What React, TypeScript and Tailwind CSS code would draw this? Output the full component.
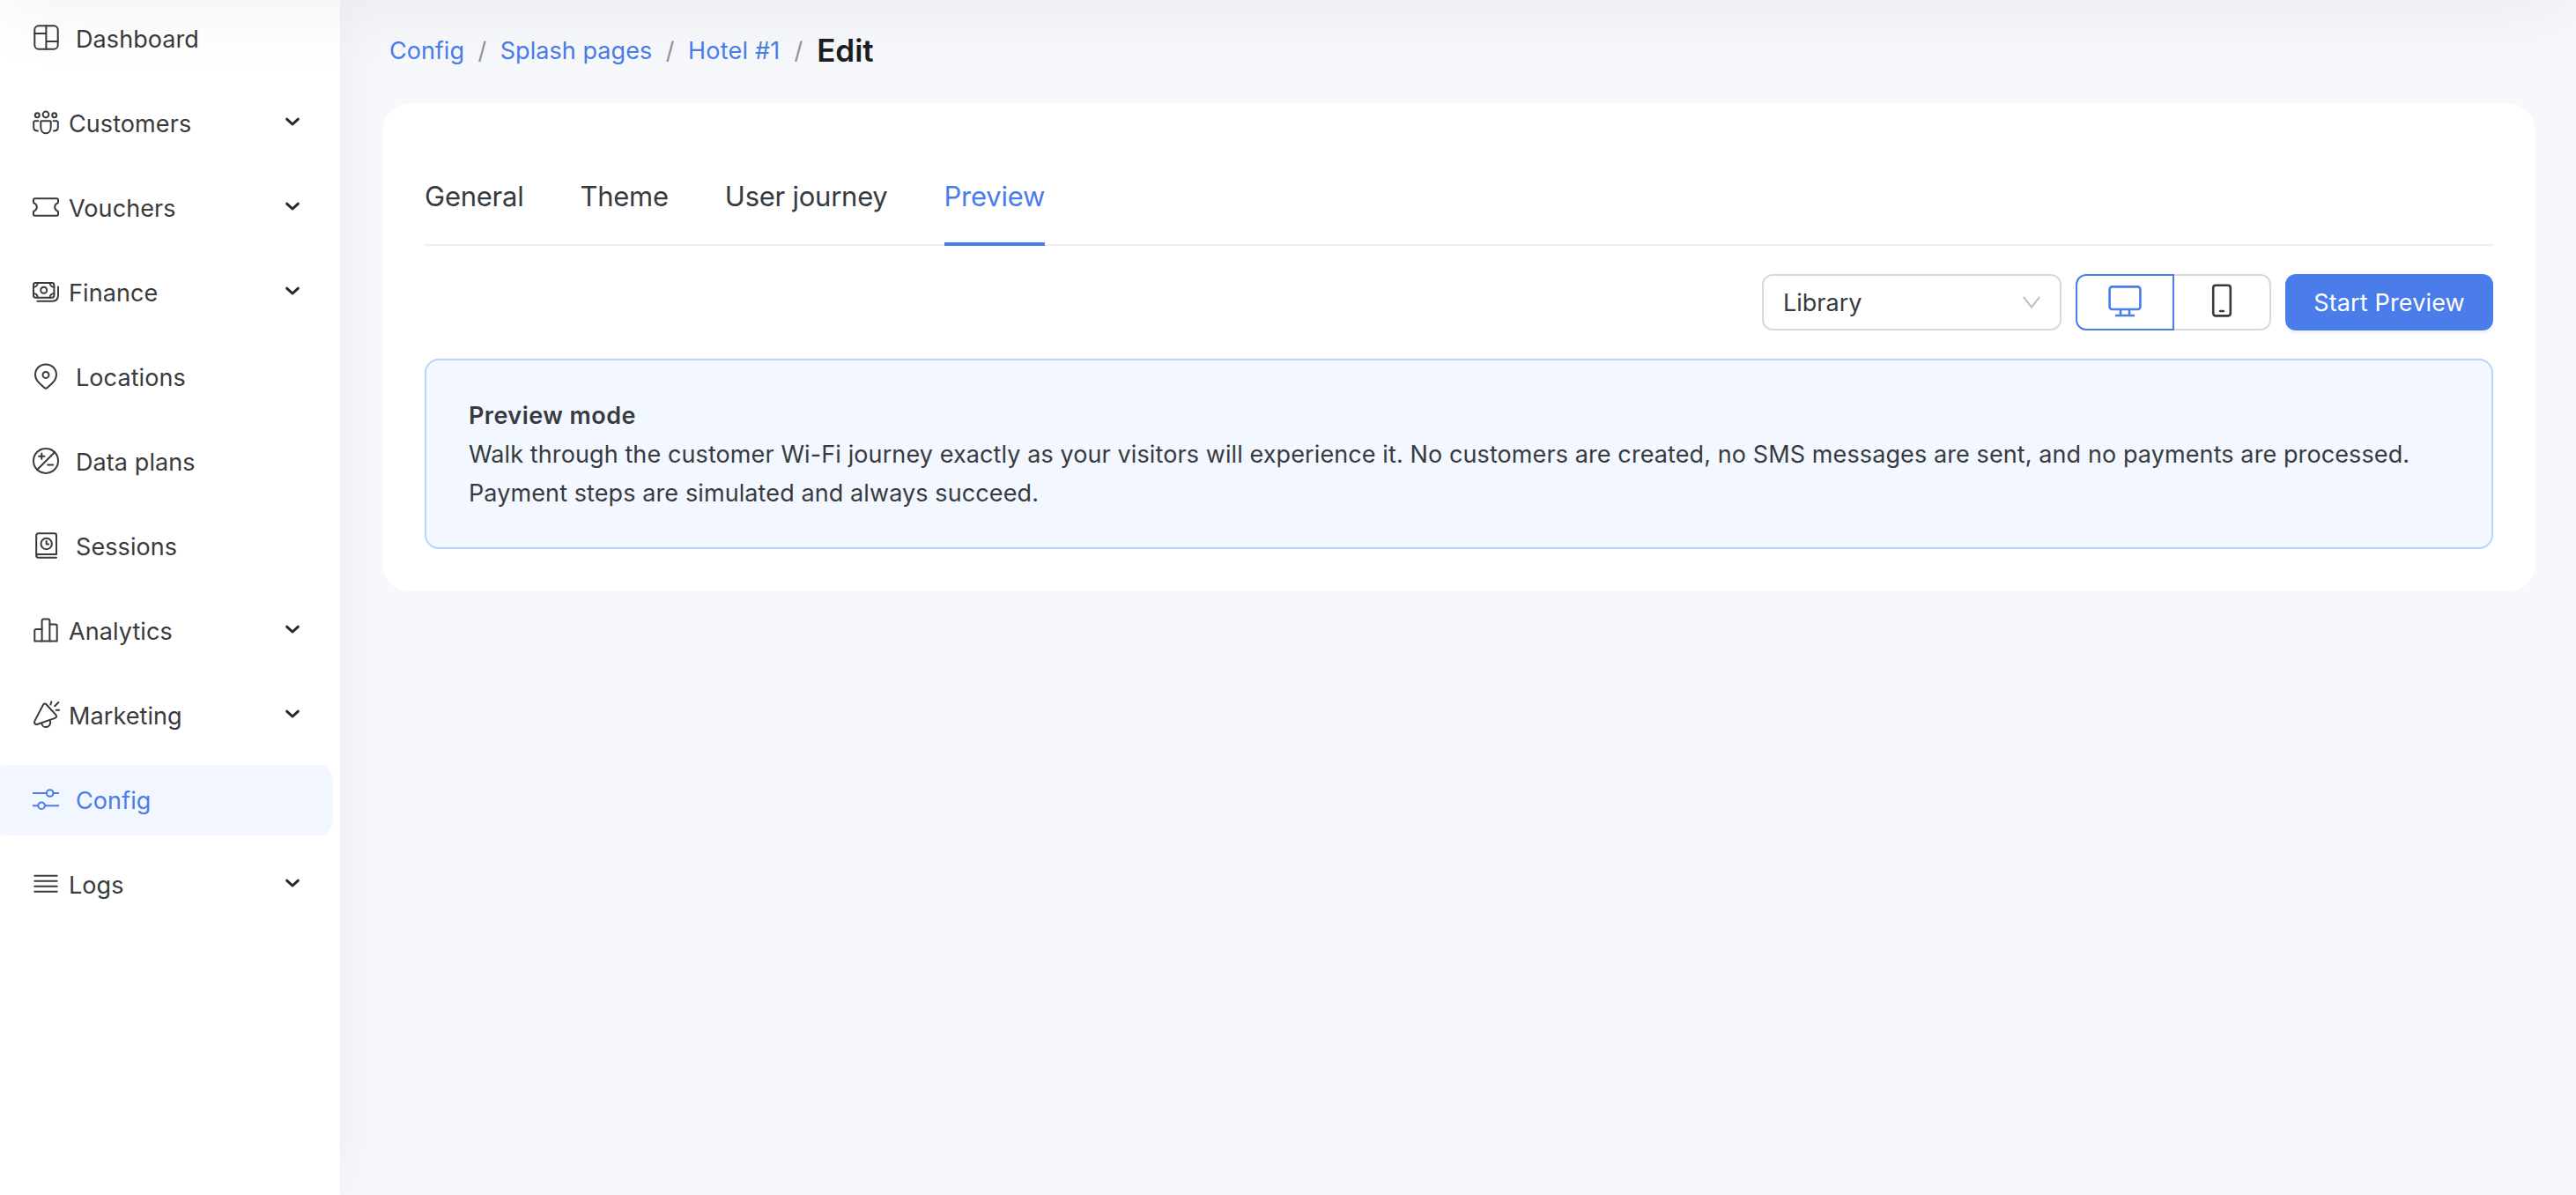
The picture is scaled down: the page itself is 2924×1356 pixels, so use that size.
import type { ReactNode } from "react";

type NavItem = {
  label: string;
  icon: ReactNode;
  expandable?: boolean;
  active?: boolean;
};

const NAV: NavItem[] = [
  {
    label: "Dashboard",
    icon: (
      <>
        <rect x="3.3" y="3.3" width="26.4" height="26.4" rx="4.5" />
        <path d="M16.4 3.3v26.4M3.3 12h13.1M16.4 21h13.3" />
      </>
    ),
  },
  {
    label: "Customers",
    expandable: true,
    icon: (
      <>
        <circle cx="6.3" cy="8.7" r="2.5" />
        <circle cx="16" cy="8" r="3.4" />
        <circle cx="25.7" cy="8.7" r="2.5" />
        <path d="M11.2 15.3h9.6a.9.9 0 0 1 .9.9v6.1c0 4-2.3 7-5.7 7s-5.7-3-5.7-7v-6.1a.9.9 0 0 1 .9-.9z" />
        <path d="M7.4 15.3H3.9a1.7 1.7 0 0 0-1.7 1.7v5.2c0 2.6 2 4.3 4.8 4.3M24.6 15.3h3.5a1.7 1.7 0 0 1 1.7 1.7v5.2c0 2.6-2 4.3-4.8 4.3" />
      </>
    ),
  },
  {
    label: "Vouchers",
    expandable: true,
    icon: (
      <path d="M3.3 7.3h25.4a1.3 1.3 0 0 1 1.3 1.3v2.6a1.6 1.6 0 0 1-1 1.5 4.7 4.7 0 0 0 0 8.6 1.6 1.6 0 0 1 1 1.5v2.6a1.3 1.3 0 0 1-1.3 1.3H3.3A1.3 1.3 0 0 1 2 25.4v-2.6a1.6 1.6 0 0 1 1-1.5 4.7 4.7 0 0 0 0-8.6 1.6 1.6 0 0 1-1-1.5V8.6a1.3 1.3 0 0 1 1.3-1.3z" />
    ),
  },
  {
    label: "Finance",
    expandable: true,
    icon: (
      <>
        <rect x="2" y="7" width="23.4" height="16.7" rx="2.4" />
        <circle cx="13.7" cy="15.3" r="3.5" />
        <path d="M2 11.8A4.8 4.8 0 0 0 6.8 7M20.6 7a4.8 4.8 0 0 0 4.8 4.8M2 18.9a4.8 4.8 0 0 1 4.8 4.8M20.6 23.7a4.8 4.8 0 0 1 4.8-4.8M30 11.6v9.4c0 4.5-2.4 6.7-6.6 6.7H6.4" />
      </>
    ),
  },
  {
    label: "Locations",
    icon: (
      <>
        <path d="M16 3.4C9.2 3.4 4 8.6 4 15.1c0 4.2 2 7.2 4.9 9.8l5.5 5.1c.9.9 2.3.9 3.2 0l5.5-5.1c2.9-2.6 4.9-5.6 4.9-9.8C28 8.6 22.8 3.4 16 3.4z" />
        <circle cx="16" cy="15.4" r="3.5" />
      </>
    ),
  },
  {
    label: "Data plans",
    icon: (
      <>
        <circle cx="16" cy="16.9" r="14" />
        <path d="M26.2 7 6.2 27M11.3 8.6v6.4M8.1 11.8h6.4M18.2 21.6h6" />
      </>
    ),
  },
  {
    label: "Sessions",
    icon: (
      <>
        <path d="M28 26.9V5.4A2.2 2.2 0 0 0 25.8 3.2H7.4A2.2 2.2 0 0 0 5.2 5.4v23.2a2.1 2.1 0 0 0 2.1 2.1H28M5.2 29a2.1 2.1 0 0 1 2.1-2.1H28" />
        <circle cx="16.7" cy="15" r="6.2" />
        <path d="M16.7 12v3.4h2.4" />
      </>
    ),
  },
  {
    label: "Analytics",
    icon: (
      <>
        <path d="M11.6 29.4H3.3V17.6a1.7 1.7 0 0 1 1.7-1.7h6.6M20.4 10.6h6.5a1.8 1.8 0 0 1 1.8 1.8v17h-8.3" />
        <path d="M11.6 29.4v-23a1.9 1.9 0 0 1 1.9-1.9h5a1.9 1.9 0 0 1 1.9 1.9v23z" />
      </>
    ),
    expandable: true,
  },
  {
    label: "Marketing",
    expandable: true,
    icon: (
      <>
        <path d="M13 5.7 3.5 23.9c-1.2 2.5.4 4.8 3.2 3.9l19.7-6.9c1.8-.7 2.3-2.4 1-3.8L16.5 5.2c-1.1-1.2-2.7-1-3.5.5z" />
        <path d="M11.3 27.1c.6 2.7 2.9 4.4 5.6 3.9 3-.5 4.8-3.2 4.2-6.8M22.4 2.2l-1 3.3M30.4 3l-4.2 4.2M27.6 11.7h3.6" />
      </>
    ),
  },
  {
    label: "Config",
    active: true,
    icon: (
      <>
        <path d="M1.8 10h14.9M24.5 10h5.7M1.8 24.2h5.4M15 24.2h15.2" />
        <circle cx="20.7" cy="10" r="3.8" />
        <circle cx="11.1" cy="24.2" r="3.8" />
      </>
    ),
  },
  {
    label: "Logs",
    expandable: true,
    icon: <path d="M3.3 7.7h25.4M3.3 13.7h25.4M3.3 19.7h25.4M3.3 25.7h25.4" />,
  },
];

function NavRow({ item }: { item: NavItem }) {
  return (
    <a
      className={`-ml-2 flex h-20 w-[386px] items-center rounded-2xl pl-11 pr-[38px] ${
        item.active ? "bg-[#f2f7ff] text-[#4a7cea]" : "text-[#373b3e]"
      }`}
    >
      <svg
        viewBox="0 0 32 32"
        className="-mt-1 size-8 shrink-0 overflow-visible"
        fill="none"
        stroke="currentColor"
        strokeWidth="2"
        strokeLinecap="round"
        strokeLinejoin="round"
      >
        {item.icon}
      </svg>
      <span
        className={`mt-0.5 tracking-[0.08px] ${item.expandable ? "ml-2.5" : "ml-[18px]"}`}
      >
        {item.label}
      </span>
      {item.expandable && (
        <svg
          viewBox="0 0 16 10"
          className="-mt-1 ml-auto h-2.5 w-4 overflow-visible"
          fill="none"
          stroke="#26292c"
          strokeWidth="3"
          strokeLinecap="round"
          strokeLinejoin="round"
        >
          <path d="M1.6 2.2 8 8l6.4-5.8" />
        </svg>
      )}
    </a>
  );
}

function Sidebar() {
  return (
    <aside className="relative w-[386px] shrink-0 bg-white shadow-[0_0_60px_rgba(0,0,0,0.05)]">
      <nav className="flex flex-col gap-4 pt-1">
        {NAV.map((item) => (
          <NavRow key={item.label} item={item} />
        ))}
      </nav>
    </aside>
  );
}

function Breadcrumbs() {
  return (
    <div className="mb-[3px] flex h-[114px] items-center pl-2 text-[#4a7cea]">
      <span className="pt-0.5">Config</span>
      <span className="mx-[15.5px] pt-0.5 text-[#909396]">/</span>
      <span className="pt-0.5 tracking-[0.06px]">Splash pages</span>
      <span className="mx-[15.5px] pt-0.5 text-[#909396]">/</span>
      <span className="pt-0.5 tracking-[0.2px]">Hotel #1</span>
      <span className="mx-[16px] pt-0.5 text-[#909396]">/</span>
      <span className="text-[35px] font-semibold text-[#1b1f22]">Edit</span>
    </div>
  );
}

function Tabs() {
  return (
    <div className="flex h-[114px] gap-16 border-b-2 border-[#f0f0f0] text-[31px] leading-[115px] tracking-[-0.25px] text-[#373b3e]">
      <span>General</span>
      <span>Theme</span>
      <span>User journey</span>
      <span className="h-[114px] border-b-4 border-[#4a7cea] text-[#4a7cea]">Preview</span>
    </div>
  );
}

function Toolbar() {
  return (
    <div className="mt-8 flex h-16 justify-end gap-4">
      <div className="flex w-[340px] items-center justify-between rounded-xl border-2 border-[#d9d9d9] px-[22px]">
        <span className="pt-0.5">Library</span>
        <svg viewBox="0 0 20 14" className="h-3.5 w-5" fill="none" stroke="#bfbfbf" strokeWidth="2">
          <path d="M.8.8 10 12.6 19.2.8" />
        </svg>
      </div>
      <div className="flex w-[222px]">
        <div className="flex w-[112px] items-center justify-center rounded-l-xl border-2 border-[#4a7cea]">
          <svg
            viewBox="0 0 38 36"
            className="-mt-0.5 h-9 w-[38px]"
            fill="none"
            stroke="#4a7cea"
            strokeWidth="2.6"
            strokeLinecap="round"
            strokeLinejoin="round"
          >
            <rect x="1.6" y="1.4" width="34.8" height="25.6" rx="3" />
            <path d="M14 27v6.6M24 27v6.6M9.2 34h19.6" />
          </svg>
        </div>
        <div className="flex w-[110px] items-center justify-center rounded-r-xl border-2 border-l-0 border-[#d9d9d9]">
          <svg
            viewBox="0 0 24 38"
            className="-mt-1 h-[38px] w-6"
            fill="none"
            stroke="#373b3e"
            strokeWidth="2.6"
            strokeLinecap="round"
            strokeLinejoin="round"
          >
            <rect x="2.2" y="1.8" width="19.6" height="34.6" rx="2.8" />
            <path d="M10.1 31h3.8" />
          </svg>
        </div>
      </div>
      <div className="flex w-[236px] items-center justify-center rounded-xl bg-[#4a7cea] pt-0.5 tracking-[0.15px] text-white shadow-[0_4px_0_#f2f7ff]">
        Start Preview
      </div>
    </div>
  );
}

export default function App() {
  return (
    <div className="relative flex h-[1356px] w-[2924px] overflow-hidden bg-[#f6f8fc] font-['Inter',sans-serif] text-[27px] leading-[44px] text-[#373b3e]">
      <Sidebar />
      <main className="relative flex-1 pl-12 pr-[46px]">
        <Breadcrumbs />
        <section className="h-[554px] rounded-[32px] bg-white px-12 pt-12">
          <Tabs />
          <Toolbar />
          <div className="mt-8 h-[216px] rounded-2xl border-2 border-[#b8d4fb] bg-[#f3f7ff] px-12 pt-[41px] tracking-[0.1px]">
            <div className="font-semibold tracking-[0.45px]">Preview mode</div>
            <p>
              Walk through the customer Wi-Fi journey exactly as your visitors will experience it. No
              customers are created, no SMS messages are sent, and no payments are processed.
              <br />
              Payment steps are simulated and always succeed.
            </p>
          </div>
        </section>
      </main>
      <div className="pointer-events-none absolute inset-x-0 -top-28 h-28 shadow-[0_0_100px_rgba(0,0,0,0.07)]" />
    </div>
  );
}
